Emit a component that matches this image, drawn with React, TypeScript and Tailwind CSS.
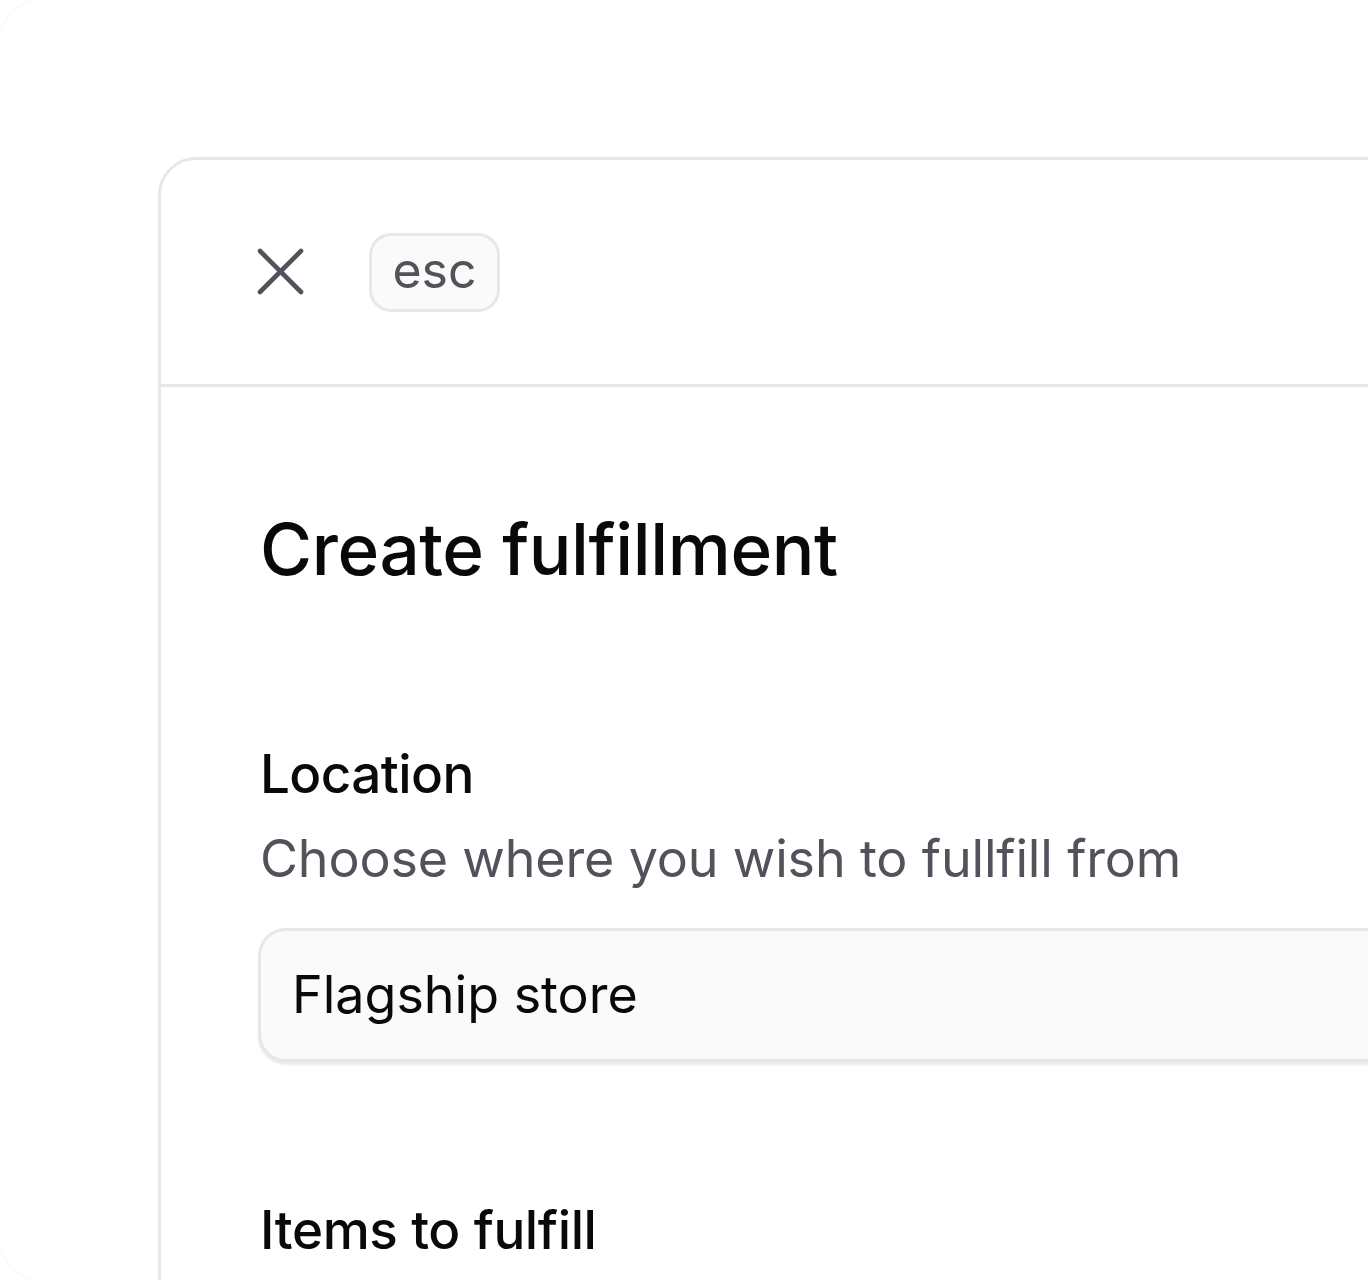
// Focus modal: close button + esc hint, then the fulfillment form
const CreateFulfillment = () => {
  return (
    <div className="h-[1280px] w-full overflow-hidden bg-white font-['Inter',_'Noto_Sans',_sans-serif]">
      {/* faint outer frame */}
      <div className="-ml-[10px] -mt-[10px] h-[1300px] w-[1500px] rounded-[76px] border border-[#f4f4f5] pl-[167px] pt-[166px]">
        <div className="h-[1300px] w-[1400px] rounded-[38px] border-[3px] border-[#e7e7e8] bg-white">
          {/* Header */}
          <div className="flex h-[227px] items-center border-b-[3px] border-[#e7e7e8] pl-[96px]">
            <button className="flex h-[48px] w-[48px] items-center justify-center text-[#52525b]">
              <svg width="48" height="48" viewBox="0 0 48 48" fill="none">
                <path
                  d="M3 3L44 44M44 3L3 44"
                  stroke="currentColor"
                  strokeWidth="4.6"
                  strokeLinecap="round"
                />
              </svg>
            </button>
            <kbd className="ml-[64px] flex h-[79px] w-[131px] items-center justify-center rounded-[22px] border-[3px] border-[#e7e7e8] bg-[#fafafa] pb-[4px] font-['Inter',_sans-serif] text-[50px] leading-none text-[#52525b]">
              esc
            </kbd>
          </div>

          {/* Body */}
          <div className="pl-[97px] pt-[126px]">
            <h1 className="ml-[2px] text-[71px] font-medium leading-[72px] tracking-[-0.4px] text-[#09090b]">
              Create fulfillment
            </h1>

            <div className="mt-[162px]">
              <p className="ml-[2px] text-[53px] font-medium leading-[54px] tracking-[-0.6px] text-[#09090b]">
                Location
              </p>
              <p className="ml-[2px] mt-[32px] text-[52px] leading-[52px] tracking-[-0.16px] text-[#52525b]">
                Choose where you wish to fullfill from
              </p>
              <div className="mt-[43px] flex h-[134px] w-[1200px] items-center rounded-[28px] border-[3px] border-[#e7e7e8] bg-[#fafafa] pl-[31px] shadow-[0_3px_2px_rgba(0,0,0,0.08)]">
                <span className="text-[52px] leading-none text-[#09090b]">Flagship store</span>
              </div>
            </div>

            <p className="ml-[2px] mt-[141px] text-[53px] font-medium leading-[54px] tracking-[-0.4px] text-[#09090b]">
              Items to fulfill
            </p>
          </div>
        </div>
      </div>
    </div>
  );
};

export default function App() {
  return <CreateFulfillment />;
}
